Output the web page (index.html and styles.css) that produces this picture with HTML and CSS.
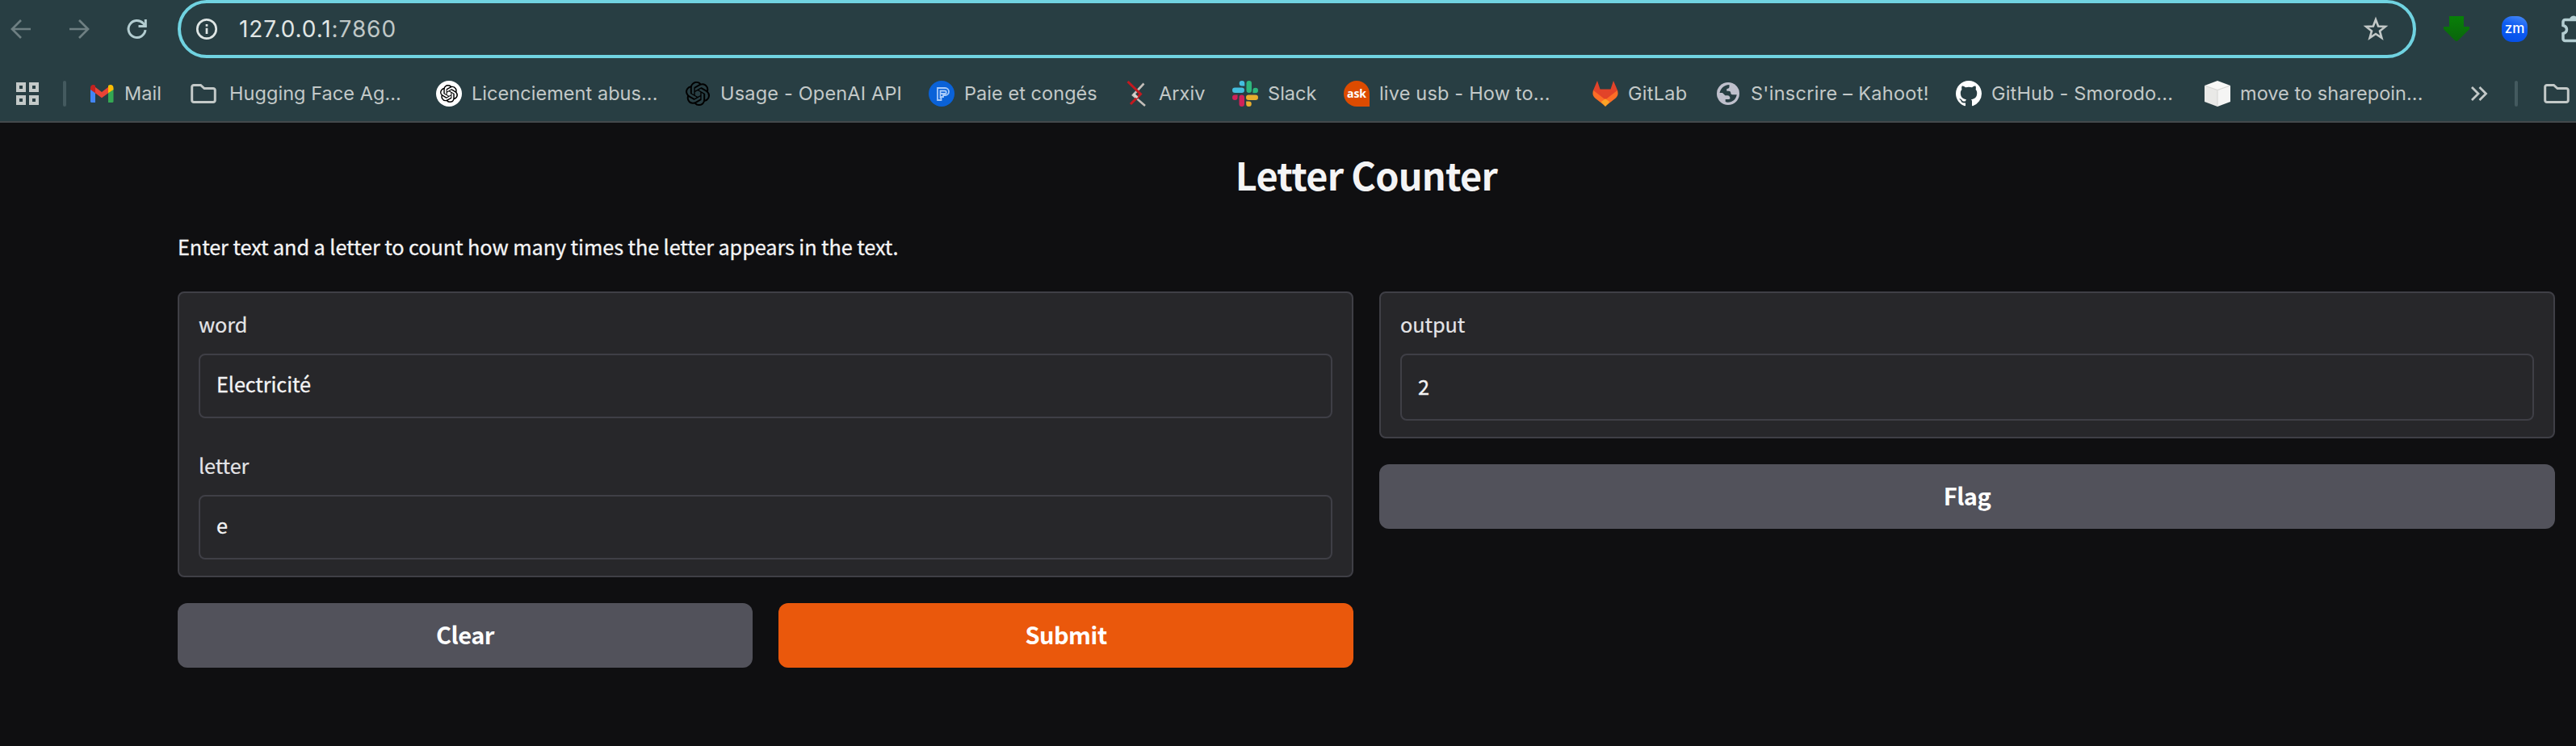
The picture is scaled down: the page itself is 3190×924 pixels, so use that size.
FILE: index.html
```html
<!DOCTYPE html>
<html lang="en">
<head>
<meta charset="utf-8">
<title>Letter Counter</title>
<link rel="stylesheet" href="styles.css">
</head>
<body>
<header class="chrome">
  <div class="toolbar">
    <div class="nav">
      <svg class="nav-icon dim" viewBox="0 0 32 32"><path d="M28 16H6M16 5 5 16l11 11"/></svg>
      <svg class="nav-icon dim" viewBox="0 0 32 32"><path d="M4 16h22M16 5l11 11-11 11"/></svg>
      <svg class="nav-icon reload" viewBox="0 0 32 32"><path d="M26 17.200A10.500 10.500 0 1 1 23.200 8.800l3.300 3.400"/><path d="M26.300 4v8.500h-8.800"/></svg>
    </div>
    <div class="omnibox">
      <svg class="info" viewBox="0 0 28 28"><circle cx="14" cy="14" r="11.700"/><path d="M14 12.700v7.300M14 8v2.700"/></svg>
      <div class="url"><span class="host">127.0.0.1</span><span class="port">:7860</span></div>
      <svg class="star" viewBox="0 0 32 32"><path d="m16 4.300 3.100 8.200 8.800.4-6.900 5.500 2.400 8.500-7.400-4.900-7.400 4.900L11 18.400l-6.900-5.500 8.800-.4z"/></svg>
    </div>
    <div class="extensions">
      <svg class="ext" viewBox="0 0 32 32"><defs><linearGradient id="dl" x1="0" y1="0" x2="0" y2="1"><stop offset="0" stop-color="#088008"/><stop offset="1" stop-color="#0a650c"/></linearGradient></defs><path fill="url(#dl)" d="M7 0h18v13h7v3L17 31h-2L0 16v-3h7z"/></svg>
      <svg class="ext" viewBox="0 0 32 32"><defs><linearGradient id="zm" x1=".7" y1="0" x2=".4" y2="1"><stop offset="0" stop-color="#4285f5"/><stop offset=".4" stop-color="#0f5df3"/><stop offset="1" stop-color="#0550e8"/></linearGradient></defs><rect width="32" height="32" rx="13" fill="url(#zm)"/><text class="zm-text" x="16" y="21" text-anchor="middle">zm</text></svg>
      <svg class="puzzle" viewBox="0 0 20 36"><path d="M20 6.500H6.500a2.500 2.500 0 0 0-2.500 2.500v4.500c2.800.8 4.500 2.500 4.500 5s-1.700 4.200-4.500 5V30a2.500 2.500 0 0 0 2.500 2.500H20"/><path class="knob" d="M12 6.500a5 5 0 0 1 8-4v4z"/></svg>
    </div>
  </div>
  <nav class="bookmarks">
    <svg class="apps" viewBox="0 0 28 28"><path d="M2 2h8v8H2zM18 2h8v8h-8zM2 18h8v8H2zM18 18h8v8h-8z"/></svg>
    <span class="divider"></span>
    <div class="bookmark"><svg class="icon" viewBox="0 0 32 32"><path fill="#4285f4" d="M2 10l6 4v13H3.500A1.500 1.500 0 0 1 2 25.500z"/><path fill="#34a853" d="M24 14l6.500-4v15.500A1.500 1.500 0 0 1 29 27h-5z"/><path fill="#ea4335" d="M7.500 7.500 16 14l8.500-6.500V15L16 21.300 7.500 15z"/><path fill="#c5221f" d="M2 9c0-4 3.500-4.800 6-3v9.200L2 11z"/><path fill="#fbbc04" d="M24 6c3-2 6.500-1 6.500 3v2L24 15.200z"/></svg><span class="label">Mail</span></div>
    <div class="bookmark"><svg class="icon" viewBox="0 0 32 32"><path class="folder" d="M4 5.500h8.500l4.500 4h11a2.300 2.300 0 0 1 2.300 2.300v12.400a2.300 2.300 0 0 1-2.300 2.300H4a2.300 2.300 0 0 1-2.300-2.300V7.800A2.300 2.300 0 0 1 4 5.500z"/></svg><span class="label after-folder">Hugging Face Ag...</span></div>
    <div class="bookmark"><svg class="icon" viewBox="0 0 32 32"><circle cx="16" cy="16" r="16" fill="#fff"/><path id="knot" transform="translate(5 5) scale(.917)" d="M22.2819 9.8211a5.9847 5.9847 0 0 0-.5157-4.9108 6.0462 6.0462 0 0 0-6.5098-2.9A6.0651 6.0651 0 0 0 4.9807 4.1818a5.9847 5.9847 0 0 0-3.9977 2.9 6.0462 6.0462 0 0 0 .7427 7.0966 5.98 5.98 0 0 0 .511 4.9107 6.051 6.051 0 0 0 6.5146 2.9001A5.9847 5.9847 0 0 0 13.2599 24a6.0557 6.0557 0 0 0 5.7718-4.2058 5.9894 5.9894 0 0 0 3.9977-2.9001 6.0557 6.0557 0 0 0-.7475-7.0729zm-9.022 12.6081a4.4755 4.4755 0 0 1-2.8764-1.0408l.1419-.0804 4.7783-2.7582a.7948.7948 0 0 0 .3927-.6813v-6.7369l2.02 1.1686a.071.071 0 0 1 .038.052v5.5826a4.504 4.504 0 0 1-4.4945 4.4944zm-9.6607-4.1254a4.4708 4.4708 0 0 1-.5346-3.0137l.142.0852 4.783 2.7582a.7712.7712 0 0 0 .7806 0l5.8428-3.3685v2.3324a.0804.0804 0 0 1-.0332.0615L9.74 19.9502a4.4992 4.4992 0 0 1-6.1408-1.6464zM2.3408 7.8956a4.485 4.485 0 0 1 2.3655-1.9728V11.6a.7664.7664 0 0 0 .3879.6765l5.8144 3.3543-2.0201 1.1685a.0757.0757 0 0 1-.071 0l-4.8303-2.7865A4.504 4.504 0 0 1 2.3408 7.872zm16.5963 3.8558L13.1038 8.364 15.1192 7.2a.0757.0757 0 0 1 .071 0l4.8303 2.7913a4.4944 4.4944 0 0 1-.6765 8.1042v-5.6772a.79.79 0 0 0-.407-.667zm2.0107-3.0231l-.142-.0852-4.7735-2.7818a.7759.7759 0 0 0-.7854 0L9.409 9.2297V6.8974a.0662.0662 0 0 1 .0284-.0615l4.8303-2.7866a4.4992 4.4992 0 0 1 6.6802 4.66zM8.3065 12.863l-2.02-1.1638a.0804.0804 0 0 1-.038-.0567V6.0742a4.4992 4.4992 0 0 1 7.3757-3.4537l-.142.0805L8.704 5.459a.7948.7948 0 0 0-.3927.6813zm1.0976-2.3654l2.602-1.4998 2.6069 1.4998v2.9994l-2.5974 1.4997-2.6067-1.4997Z"/></svg><span class="label">Licenciement abus...</span></div>
    <div class="bookmark"><svg class="icon" viewBox="4.300 4.500 23.400 23"><use href="#knot"/></svg><span class="label wide">Usage - OpenAI API</span></div>
    <div class="bookmark"><svg class="icon" viewBox="0 0 32 32"><circle cx="16" cy="16" r="16" fill="#0a62d8"/><path class="paie" d="M11 9h9.500a4 4 0 0 1 0 9H18v2h-2.500v4H11zM14.500 22V12.500H20a1.500 1.500 0 0 1 0 3.500h-5"/></svg><span class="label">Paie et congés</span></div>
    <div class="bookmark"><svg class="icon" viewBox="0 0 32 32"><path d="M22.500 3.500 9 18l15 13" stroke="#c3beb9" stroke-width="2.600" fill="none"/><path d="M2.500 1 18.500 16.500 6 29" stroke="#c3191f" stroke-width="3" fill="none"/><path d="m9.500 16 5 5" stroke="#d8d2cd" stroke-width="3"/></svg><span class="label arxiv">Arxiv</span></div>
    <div class="bookmark"><svg class="icon" viewBox="0 0 32 32"><g fill="#44bede"><rect x="0" y="8.500" width="15" height="6.500" rx="3.250"/><path d="M12 0a3.300 3.300 0 0 1 3.300 3.300v3.300H12A3.300 3.300 0 0 1 12 0z"/></g><g fill="#2eb67d"><rect x="17.500" y="0" width="6.500" height="15" rx="3.250"/><path d="M32 12a3.300 3.300 0 0 1-3.300 3.300h-3.300V12a3.300 3.300 0 0 1 6.600 0z"/></g><g fill="#e8ae2e"><rect x="17" y="17.500" width="15" height="6.500" rx="3.250"/><path d="M20.500 32a3.300 3.300 0 0 1-3.300-3.300v-3.300h3.300a3.300 3.300 0 0 1 0 6.600z"/></g><g fill="#d0225a"><rect x="8.500" y="17.500" width="6.500" height="14.500" rx="3.250"/><path d="M0 20.800a3.300 3.300 0 0 1 3.300-3.300h3.300v3.300a3.300 3.300 0 0 1-6.600 0z"/></g></svg><span class="label">Slack</span></div>
    <div class="bookmark"><svg class="icon" viewBox="0 0 32 32"><path fill="#dd4b00" d="M16 0a16 16 0 0 1 16 16v16H16a16 16 0 0 1 0-32z"/><text class="ask-text" x="16" y="21" text-anchor="middle">ask</text></svg><span class="label wide">live usb - How to...</span></div>
    <div class="bookmark"><svg class="icon" viewBox="0 0 32 32"><path fill="#e24329" d="M6 0 9.500 10.500h13L26 0l5.500 13L16 25 .5 13z"/><path fill="#fc6d26" d="M1.200 12 16 23.500 30.800 12c1.500 3.500.9 7-2.300 9.700L16 31.500 3.500 21.700C.300 19-.300 15.500 1.200 12z"/><path fill="#e24329" d="m6 11.500 10 11 10-11z"/><path fill="#fca326" d="m16 22.300 5.300 4L16 32l-5.300-5.700z"/></svg><span class="label wider">GitLab</span></div>
    <div class="bookmark"><svg class="icon" viewBox="0 0 32 32"><circle cx="16" cy="16" r="14" fill="#bfc0cc"/><path fill="#283e43" d="M5.500 15C6.500 10 10.500 5.500 17.500 5v2.500c0 1.500-1 2.500-3.200 2.500v2.700h2.500c1.800 0 2.500 1.200 2.500 2.500 0 1.300.8 2 2.200 2h5.200c-.5 5-5 9.500-10.700 9.500-1.500 0-2.500-.3-3.300-.8V23h4c1.300 0 2-.7 1.700-2-.4-1.700-1.300-2.800-3-2.800h-3L9 15z"/></svg><span class="label wider">S'inscrire – Kahoot!</span></div>
    <div class="bookmark"><svg class="icon" viewBox="0 0 16 16"><path fill="#fff" d="M8 0C3.580 0 0 3.580 0 8c0 3.540 2.290 6.530 5.470 7.590.4.070.55-.17.55-.38 0-.19-.01-.82-.01-1.490-2.010.37-2.530-.49-2.690-.94-.09-.23-.48-.94-.82-1.130-.28-.15-.68-.52-.01-.53.63-.01 1.080.58 1.230.82.72 1.210 1.870.87 2.330.66.07-.52.28-.87.51-1.070-1.780-.2-3.640-.89-3.640-3.950 0-.87.31-1.590.82-2.150-.08-.2-.36-1.020.08-2.120 0 0 .67-.21 2.200.82.64-.18 1.320-.27 2-.27s1.360.09 2 .27c1.530-1.040 2.200-.82 2.200-.82.44 1.100.16 1.920.08 2.120.51.56.82 1.270.82 2.150 0 3.070-1.870 3.750-3.650 3.950.29.25.54.73.54 1.480 0 1.070-.01 1.930-.01 2.200 0 .21.15.46.55.38A8.010 8.010 0 0 0 16 8c0-4.420-3.580-8-8-8z"/></svg><span class="label wide">GitHub - Smorodo...</span></div>
    <div class="bookmark"><svg class="icon" viewBox="0 0 32 32"><path fill="#f8f8f6" d="M16 0l16 6-16 6L0 6z"/><path fill="#e9e9e7" d="M0 6l16 5.500V32L0 26z"/><path fill="#f5f5f4" d="M32 6l-16 5.500V32l16-6z"/><path d="M1 6.300 16 11.500l15-5.200M16 11.500V31" fill="none" stroke="#dadad7" stroke-width="1.200"/></svg><span class="label">move to sharepoin...</span></div>
    <svg class="more" viewBox="0 0 24 24"><path d="m3 4 8 8-8 8M12.500 4l8 8-8 8"/></svg>
    <span class="divider"></span>
    <svg class="icon" viewBox="0 0 32 32"><path class="folder" d="M4 5.500h8.500l4.500 4h11a2.300 2.300 0 0 1 2.300 2.300v12.400a2.300 2.300 0 0 1-2.300 2.300H4a2.300 2.300 0 0 1-2.300-2.300V7.800A2.300 2.300 0 0 1 4 5.500z"/></svg>
  </nav>
</header>
<main class="app">
  <h1 class="title">Letter Counter</h1>
  <p class="description">Enter text and a letter to count how many times the letter appears in the text.</p>
  <div class="columns">
    <section class="column">
      <div class="panel">
        <div class="field"><div class="field-label">word</div><div class="textbox">Electricité</div></div>
        <div class="field"><div class="field-label">letter</div><div class="textbox">e</div></div>
      </div>
      <div class="actions">
        <button class="button">Clear</button>
        <button class="button primary">Submit</button>
      </div>
    </section>
    <section class="column">
      <div class="panel">
        <div class="field"><div class="field-label">output</div><div class="textbox number">2</div></div>
      </div>
      <button class="button">Flag</button>
    </section>
  </div>
</main>
</body>
</html>
```

FILE: styles.css
```css
* { box-sizing: border-box; }

body {
  margin: 0;
  width: 3190px;
  height: 924px;
  overflow: hidden;
  background: #0f0f11;
  font-family: "Noto Sans CJK SC", "Noto Sans", sans-serif;
}

svg { display: block; flex: none; }

/* Browser chrome */
.chrome {
  height: 152px;
  background: #283e43;
  border-bottom: 2px solid #44494c;
  font-family: Inter, sans-serif;
  overflow: hidden;
}

.toolbar { display: flex; height: 72px; align-items: center; }

.nav { display: flex; width: 220px; padding-left: 10px; gap: 40px; }

.nav-icon { width: 32px; height: 32px; fill: none; stroke: #b3cdd1; stroke-width: 2.7; }
.nav-icon.dim { stroke: #6e7f82; }
.nav-icon.reload { stroke-width: 3; }

.omnibox {
  display: flex;
  align-items: center;
  width: 2772px;
  height: 72px;
  border: 4px solid #70d3e1;
  border-radius: 36px;
  padding: 0 30px 0 18px;
}

.info { width: 28px; height: 28px; fill: none; stroke: #dfe6e5; stroke-width: 2.7; }

.url { flex: 1; padding-left: 26px; font-size: 28px; line-height: 36px; letter-spacing: 0.9px; white-space: nowrap; }
.host { color: #e1e6e5; }
.port { color: #c0c8c7; }

.star { width: 32px; height: 32px; fill: none; stroke: #c3c9c8; stroke-width: 2.6; }

.extensions { display: flex; align-items: center; padding-left: 34px; gap: 40px; }
.ext { width: 32px; height: 32px; }
.zm-text { font: 500 17px Inter, sans-serif; fill: #fff; }
.puzzle { width: 20px; height: 36px; fill: none; stroke: #b3cdd1; stroke-width: 3.5; }
.puzzle .knob { fill: #b3cdd1; stroke: none; }

.bookmarks {
  display: grid;
  grid-template-columns: 58px 32px 126px 304px 308px 302px 244px 132px 138px 308px 152px 298px 308px 328px 56px 36px 32px;
  align-items: center;
  height: 78px;
  padding: 10px 0 0 20px;
}

.apps { width: 28px; height: 28px; fill: none; stroke: #c3c9c8; stroke-width: 4; }
.divider { width: 4px; height: 32px; border-radius: 2px; background: #445a5f; }
.bookmark { display: flex; align-items: center; gap: 12px; }
.icon { width: 32px; height: 32px; }
.folder { fill: none; stroke: #c3c9c8; stroke-width: 3; }
.paie { fill: none; stroke: #a9cbfa; stroke-width: 1.8; }
.ask-text { font: 700 14px "Open Sans", sans-serif; fill: #fff; }
.more { width: 24px; height: 24px; fill: none; stroke: #c3c9c8; stroke-width: 2.8; }

.label { font-size: 23.5px; line-height: 32px; letter-spacing: 0.05px; color: #c3c9c8; white-space: nowrap; }
.label.after-folder { margin-left: 4px; }
.label.arxiv { margin-left: -3px; }
.label.wide { letter-spacing: 0.18px; }
.label.wider { letter-spacing: 0.28px; }

/* Application */
.app { padding: 30px 26px 0 220px; color: #f4f4f5; }

.title {
  margin: 0;
  font-size: 46.8px;
  line-height: 68px;
  font-weight: 700;
  letter-spacing: -0.75px;
  text-align: center;
}

.description { margin: 34px 0 0; font-size: 25.3px; line-height: 42px; letter-spacing: -0.1px; -webkit-text-stroke: 0.3px; }

.columns { display: grid; grid-template-columns: 1fr 1fr; gap: 32px; margin-top: 35px; }

.column { display: flex; flex-direction: column; gap: 32px; }

.panel {
  display: flex;
  flex-direction: column;
  gap: 40px;
  padding: 20px 24px;
  border: 2px solid #3f3f46;
  border-radius: 8px;
  background: #27272a;
}

.field { display: flex; flex-direction: column; gap: 19px; }

.field-label { font-size: 25.3px; line-height: 36px; letter-spacing: -0.1px; color: #e4e4e7; -webkit-text-stroke: 0.2px; }

.textbox {
  display: flex;
  align-items: center;
  height: 80px;
  padding: 0 20px 6px;
  border: 2px solid #3f3f46;
  border-radius: 8px;
  font-size: 25.3px;
  letter-spacing: -0.1px;
  color: #f4f4f5;
  -webkit-text-stroke: 0.3px;
}

.textbox.number { height: 83px; padding-bottom: 3px; }

.actions { display: grid; grid-template-columns: 1fr 1fr; gap: 32px; }

.button {
  height: 80px;
  border: 0;
  border-radius: 12px;
  padding: 0 0 4px;
  background: #52525b;
  color: #fff;
  font: 700 29px/44px "Noto Sans CJK SC", "Noto Sans", sans-serif;
  letter-spacing: -0.5px;
}

.button.primary { background: #ea580c; }
```
